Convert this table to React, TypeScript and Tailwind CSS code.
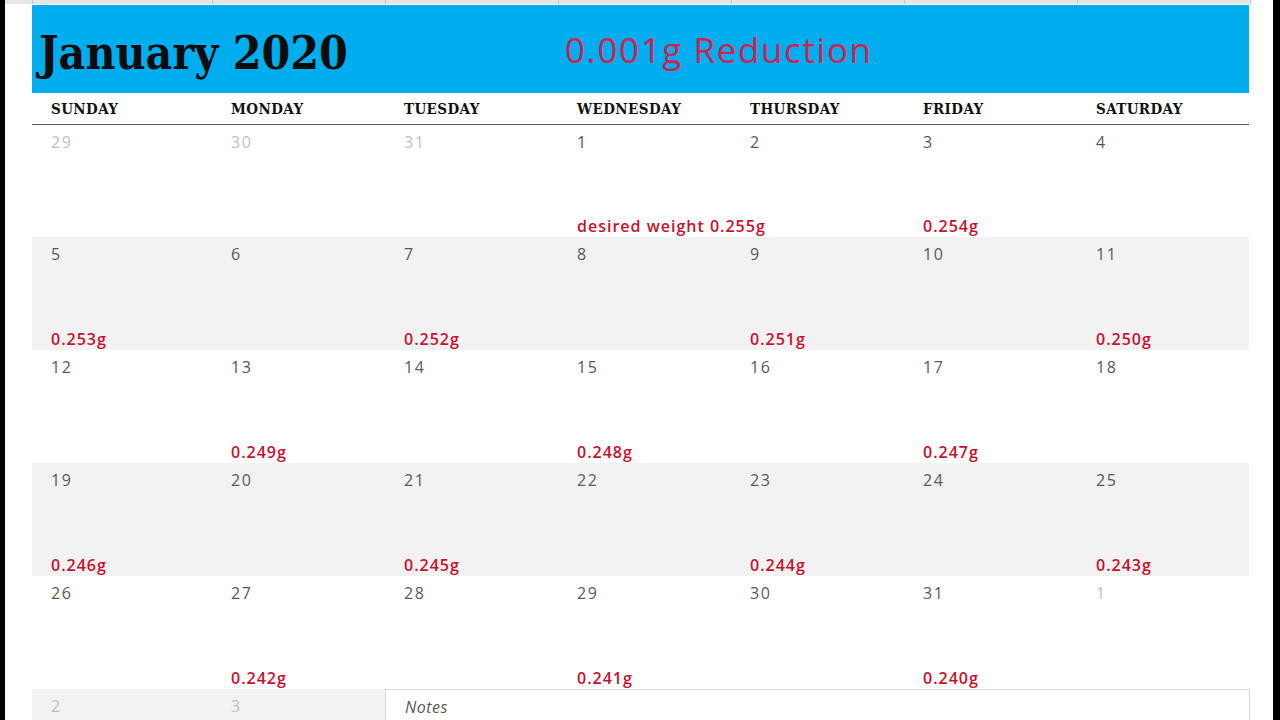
const days = ["SUNDAY", "MONDAY", "TUESDAY", "WEDNESDAY", "THURSDAY", "FRIDAY", "SATURDAY"];

type Cell = { day: number; muted?: boolean; note?: string };

const weeks: Cell[][] = [
  [
    { day: 29, muted: true },
    { day: 30, muted: true },
    { day: 31, muted: true },
    { day: 1, note: "desired weight 0.255g" },
    { day: 2 },
    { day: 3, note: "0.254g" },
    { day: 4 },
  ],
  [
    { day: 5, note: "0.253g" },
    { day: 6 },
    { day: 7, note: "0.252g" },
    { day: 8 },
    { day: 9, note: "0.251g" },
    { day: 10 },
    { day: 11, note: "0.250g" },
  ],
  [
    { day: 12 },
    { day: 13, note: "0.249g" },
    { day: 14 },
    { day: 15, note: "0.248g" },
    { day: 16 },
    { day: 17, note: "0.247g" },
    { day: 18 },
  ],
  [
    { day: 19, note: "0.246g" },
    { day: 20 },
    { day: 21, note: "0.245g" },
    { day: 22 },
    { day: 23, note: "0.244g" },
    { day: 24 },
    { day: 25, note: "0.243g" },
  ],
  [
    { day: 26 },
    { day: 27, note: "0.242g" },
    { day: 28 },
    { day: 29, note: "0.241g" },
    { day: 30 },
    { day: 31, note: "0.240g" },
    { day: 1, muted: true },
  ],
];

const cols = "grid grid-cols-[180px_repeat(6,173px)]";
const slab = { fontFamily: '"DejaVu Serif", serif' };

function DayCell({ cell }: { cell: Cell }) {
  return (
    <div className="flex h-full flex-col justify-between pl-[19px] pt-[6px]">
      <span
        className={`text-[16px] leading-[22px] tracking-[1.5px] ${cell.muted ? "text-[#bfbfbf]" : "text-[#595959]"}`}
      >
        {cell.day}
      </span>
      {cell.note && (
        <span className="whitespace-nowrap text-[16px] leading-[22px] font-semibold tracking-[1px] text-[#c8102e]">
          {cell.note}
        </span>
      )}
    </div>
  );
}

export default function App() {
  return (
    <div
      className="flex h-[720px] w-[1280px] overflow-hidden bg-white"
      style={{ fontFamily: '"Open Sans", "Noto Sans", sans-serif' }}
    >
      <div className="w-[5px] shrink-0 bg-black" />
      <div className="flex min-w-0 flex-1 flex-col">
        {/* spreadsheet column strip */}
        <div className="flex h-[4px] shrink-0">
          <div className="w-[27px] bg-[#e6e6e6]" />
          <div className={`${cols} border-l border-[#c6c6c6]`}>
            {days.map((d) => (
              <div key={d} className="border-r border-[#c6c6c6] bg-[#e6e6e6]" />
            ))}
          </div>
        </div>

        <div className="pl-[27px] pt-[1px]">
          <div className="w-[1217px]">
            {/* banner */}
            <div className="flex h-[88px] items-center bg-[#00adef]">
              <h1
                className="w-[533px] pl-[7px] pt-[8px] text-[46px] font-bold leading-none text-[#0d0d0d] font-stretch-condensed"
                style={slab}
              >
                January 2020
              </h1>
              <span className="text-[35px] leading-none tracking-[1.6px] text-[#cf2250]">
                0.001g Reduction
              </span>
            </div>

            {/* weekday header */}
            <div className={`${cols} h-[32px] items-center border-b border-[#5a5a5a]`}>
              {days.map((d) => (
                <div
                  key={d}
                  className="pl-[19px] pt-[1px] text-[15px] font-bold tracking-[0.4px] text-[#111] font-stretch-condensed"
                  style={slab}
                >
                  {d}
                </div>
              ))}
            </div>

            {weeks.map((week, i) => (
              <div
                key={i}
                className={`${cols} ${i === 0 ? "h-[112px]" : "h-[113px]"} ${i % 2 === 1 ? "bg-[#f2f2f2]" : "bg-white"}`}
              >
                {week.map((c, j) => (
                  <DayCell key={j} cell={c} />
                ))}
              </div>
            ))}

            {/* trailing row with notes */}
            <div className={`${cols} h-[40px]`}>
              <div className="bg-[#f2f2f2]">
                <DayCell cell={{ day: 2, muted: true }} />
              </div>
              <div className="bg-[#f2f2f2]">
                <DayCell cell={{ day: 3, muted: true }} />
              </div>
              <div className="col-span-5 border-l border-t border-r border-[#d9d9d9] pl-[19px] pt-[5px]">
                <span className="text-[16px] italic tracking-[0.5px] text-[#595959]">Notes</span>
              </div>
            </div>
          </div>
        </div>
      </div>
      <div className="w-[7px] shrink-0 bg-black" />
    </div>
  );
}
